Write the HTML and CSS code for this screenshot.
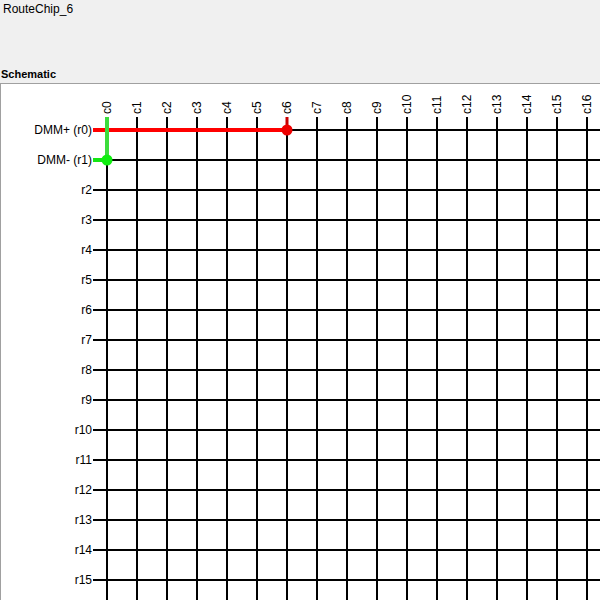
FILE: index.html
```html
<!DOCTYPE html>
<html>
<head>
<meta charset="utf-8">
<link rel="stylesheet" href="styles.css">
</head>
<body>
<div class="header">
  <div class="title">RouteChip_6</div>
  <div class="section">Schematic</div>
</div>
<div class="panel">
  <svg class="schem" width="599" height="516" viewBox="0 0 599 516" xmlns="http://www.w3.org/2000/svg">
    <g class="grid">
      <line x1="106" y1="33" x2="106" y2="516"/>
      <line x1="136" y1="33" x2="136" y2="516"/>
      <line x1="166" y1="33" x2="166" y2="516"/>
      <line x1="196" y1="33" x2="196" y2="516"/>
      <line x1="226" y1="33" x2="226" y2="516"/>
      <line x1="256" y1="33" x2="256" y2="516"/>
      <line x1="286" y1="33" x2="286" y2="516"/>
      <line x1="316" y1="33" x2="316" y2="516"/>
      <line x1="346" y1="33" x2="346" y2="516"/>
      <line x1="376" y1="33" x2="376" y2="516"/>
      <line x1="406" y1="33" x2="406" y2="516"/>
      <line x1="436" y1="33" x2="436" y2="516"/>
      <line x1="466" y1="33" x2="466" y2="516"/>
      <line x1="496" y1="33" x2="496" y2="516"/>
      <line x1="526" y1="33" x2="526" y2="516"/>
      <line x1="556" y1="33" x2="556" y2="516"/>
      <line x1="586" y1="33" x2="586" y2="516"/>
      <line x1="92" y1="46" x2="599" y2="46"/>
      <line x1="92" y1="76" x2="599" y2="76"/>
      <line x1="92" y1="106" x2="599" y2="106"/>
      <line x1="92" y1="136" x2="599" y2="136"/>
      <line x1="92" y1="166" x2="599" y2="166"/>
      <line x1="92" y1="196" x2="599" y2="196"/>
      <line x1="92" y1="226" x2="599" y2="226"/>
      <line x1="92" y1="256" x2="599" y2="256"/>
      <line x1="92" y1="286" x2="599" y2="286"/>
      <line x1="92" y1="316" x2="599" y2="316"/>
      <line x1="92" y1="346" x2="599" y2="346"/>
      <line x1="92" y1="376" x2="599" y2="376"/>
      <line x1="92" y1="406" x2="599" y2="406"/>
      <line x1="92" y1="436" x2="599" y2="436"/>
      <line x1="92" y1="466" x2="599" y2="466"/>
      <line x1="92" y1="496" x2="599" y2="496"/>
    </g>
    <g class="collabels">
      <text transform="translate(110 30) rotate(-90)">c0</text>
      <text transform="translate(140 30) rotate(-90)">c1</text>
      <text transform="translate(170 30) rotate(-90)">c2</text>
      <text transform="translate(200 30) rotate(-90)">c3</text>
      <text transform="translate(230 30) rotate(-90)">c4</text>
      <text transform="translate(260 30) rotate(-90)">c5</text>
      <text transform="translate(290 30) rotate(-90)">c6</text>
      <text transform="translate(320 30) rotate(-90)">c7</text>
      <text transform="translate(350 30) rotate(-90)">c8</text>
      <text transform="translate(380 30) rotate(-90)">c9</text>
      <text transform="translate(410 30) rotate(-90)">c10</text>
      <text transform="translate(440 30) rotate(-90)">c11</text>
      <text transform="translate(470 30) rotate(-90)">c12</text>
      <text transform="translate(500 30) rotate(-90)">c13</text>
      <text transform="translate(530 30) rotate(-90)">c14</text>
      <text transform="translate(560 30) rotate(-90)">c15</text>
      <text transform="translate(590 30) rotate(-90)">c16</text>
    </g>
    <g class="rowlabels">
      <text x="91" y="50">DMM+ (r0)</text>
      <text x="91" y="80">DMM- (r1)</text>
      <text x="91" y="110">r2</text>
      <text x="91" y="140">r3</text>
      <text x="91" y="170">r4</text>
      <text x="91" y="200">r5</text>
      <text x="91" y="230">r6</text>
      <text x="91" y="260">r7</text>
      <text x="91" y="290">r8</text>
      <text x="91" y="320">r9</text>
      <text x="91" y="350">r10</text>
      <text x="91" y="380">r11</text>
      <text x="91" y="410">r12</text>
      <text x="91" y="440">r13</text>
      <text x="91" y="470">r14</text>
      <text x="91" y="500">r15</text>
    </g>
    <g class="net-red">
      <line class="wire" x1="92" y1="46" x2="286" y2="46"/>
      <line class="stub" x1="286" y1="33" x2="286" y2="46"/>
      <circle cx="286" cy="46" r="5.5"/>
    </g>
    <g class="net-green">
      <line class="stub" x1="106" y1="33" x2="106" y2="76"/>
      <line class="wire" x1="92" y1="76" x2="106" y2="76"/>
      <circle cx="106" cy="76" r="5.5"/>
    </g>
  </svg>
</div>
</body>
</html>
```
FILE: styles.css
```css
html, body {
  margin: 0;
  padding: 0;
  width: 600px;
  height: 600px;
  overflow: hidden;
  background: #f0f0f0;
  font-family: "Liberation Sans", Arial, sans-serif;
  color: #000;
}

.header {
  height: 83px;
  display: flex;
  flex-direction: column;
  justify-content: space-between;
}

.title {
  font-size: 12px;
  line-height: 16px;
  padding: 1px 3px 0;
}

.section {
  font-size: 11px;
  font-weight: bold;
  line-height: 13px;
  padding: 0 1px;
  margin-bottom: 2px;
}

.panel {
  height: 517px;
  background: #fff;
  border-top: 1px solid #a0a0a0;
  border-left: 1px solid #a0a0a0;
  overflow: hidden;
}

.schem {
  display: block;
}

.grid line {
  stroke: #000;
  stroke-width: 2;
  shape-rendering: crispEdges;
}

.collabels text,
.rowlabels text {
  font-family: "Liberation Sans", Arial, sans-serif;
  font-size: 12px;
  fill: #000;
}

.rowlabels text {
  text-anchor: end;
}

.net-red .wire {
  stroke: #ff0000;
  stroke-width: 4;
}

.net-red .stub {
  stroke: #c80000;
  stroke-width: 3;
}

.net-red circle {
  fill: #ee0000;
}

.net-green .stub {
  stroke: #3cdc3c;
  stroke-width: 4;
}

.net-green .wire {
  stroke: #14e614;
  stroke-width: 4;
}

.net-green circle {
  fill: #10ee10;
}
```
